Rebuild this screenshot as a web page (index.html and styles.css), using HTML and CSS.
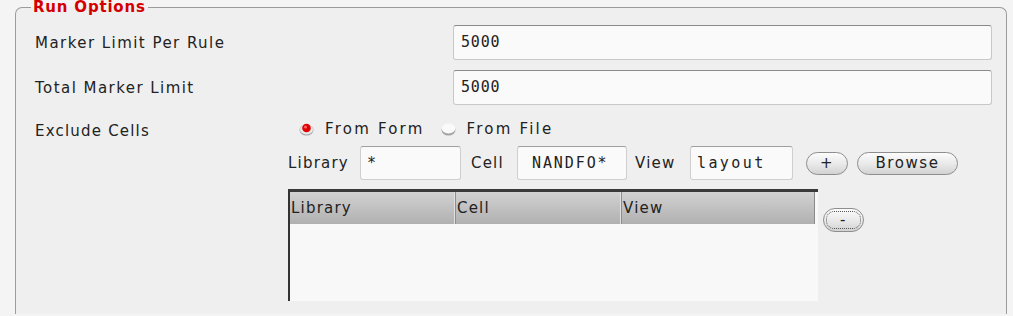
FILE: index.html
```html
<html>
	<head>
		<title>Run Options</title>
		<link rel="stylesheet" href="styles.css">
	</head>
	<body>
<fieldset class="group">
	<legend>Run Options</legend>

	<div class="row first">
		<label class="label wide">Marker Limit Per Rule</label>
		<div class="field">5000</div>
	</div>
	<div class="row">
		<label class="label wide">Total Marker Limit</label>
		<div class="field">5000</div>
	</div>

	<div class="exclude">
		<label class="label narrow">Exclude Cells</label>
		<div class="panel">
			<div class="radios">
				<svg class="radio" width="15" height="14" viewBox="0 0 15 14">
					<ellipse cx="7.5" cy="8" rx="7" ry="5.5" fill="#a4a4a4"/>
					<ellipse cx="7.5" cy="7.5" rx="6.5" ry="5" fill="#e9e9e9"/>
					<circle cx="7.5" cy="6" r="4.3" fill="#e00000"/>
					<circle cx="6.5" cy="5" r="1.5" fill="#ff6060"/>
				</svg><span class="rtext">From Form</span>
				<svg class="radio" width="15" height="14" viewBox="0 0 15 14">
					<ellipse cx="7.5" cy="8" rx="7" ry="5.5" fill="#a4a4a4"/>
					<ellipse cx="7.5" cy="6.5" rx="6.8" ry="5" fill="#fafafa"/>
				</svg><span class="rtext">From File</span>
			</div>
			<div class="cells">
				<span class="lbl l1">Library</span><div class="box lib">*</div>
				<span class="lbl l2">Cell</span><div class="box cell">NANDFO*</div>
				<span class="lbl l3">View</span><div class="box view">layout</div>
				<button class="btn plus">+</button>
				<button class="btn browse">Browse</button>
			</div>
			<div class="tablerow">
				<div class="table">
					<div class="thead">
						<div class="th c1">Library</div>
						<div class="th c2">Cell</div>
						<div class="th c3">View</div>
					</div>
					<div class="tbody"></div>
				</div>
				<button class="btn minus"><span class="focus">-</span></button>
			</div>
		</div>
	</div>
</fieldset>
	</body>
</html>
```

FILE: styles.css
```css
BODY {
	background: #f4f4f4;
	color: #222;
	font-family: "DejaVu Sans", sans-serif;
	font-size: 15px;
	letter-spacing: 1.2px;
	margin: 0;
	}
.group {
	background: #efefef;
	border: 1px solid #9c9c9c;
	border-bottom: none;
	border-radius: 7px 7px 0 0;
	box-sizing: border-box;
	height: 314px;
	margin: 0 6px 0 15px;
	padding: 10px 0 0 0;
	}
.group legend {
	color: #d40000;
	font-size: 15px;
	font-weight: bold;
	letter-spacing: 0.8px;
	line-height: 15px;
	margin-left: 15px;
	padding: 0 2px;
	}
.row {
	align-items: center;
	display: flex;
	margin-top: 10px;
	}
.row.first { margin-top: 0; }
.label { padding-left: 19px; }
.row .label { letter-spacing: 1.45px; }
.wide { width: 418px; flex: none; }
.narrow { width: 253px; flex: none; }
.field {
	background: #fafafa;
	border: 1px solid #c8c8c8;
	border-top-color: #8a8a8a;
	border-radius: 3px;
	box-sizing: border-box;
	font-family: "DejaVu Sans Mono", monospace;
	font-size: 15px;
	letter-spacing: 0.8px;
	height: 35px;
	line-height: 33px;
	padding-left: 7px;
	width: 539px;
	}
.exclude {
	display: flex;
	margin-top: 11px;
	}
.exclude .label { line-height: 26px; padding-top: 2px; }
.radios {
	align-items: center;
	display: flex;
	height: 26px;
	padding-left: 11px;
	}
.radio { flex: none; }
.rtext { margin: 0 16px 0 11px; letter-spacing: 2.2px; }
.cells {
	align-items: center;
	display: flex;
	margin-top: 4px;
	}
.lbl { flex: none; }
.l1 { width: 62px; }
.l2 { width: 36px; }
.l3 { width: 45px; }
.box {
	background: #fafafa;
	border: 1px solid #cfcfcf;
	border-top-color: #a0a0a0;
	border-radius: 3px;
	box-sizing: border-box;
	flex: none;
	font-family: "DejaVu Sans Mono", monospace;
	font-size: 15px;
	letter-spacing: 2.4px;
	height: 34px;
	line-height: 32px;
	margin: 0 10px;
	padding-left: 6px;
	}
.lib { width: 101px; }
.cell { width: 110px; margin-right: 8px; padding-left: 14px; letter-spacing: 1.9px; }
.view { width: 103px; margin-right: 13px; }
.btn {
	background: linear-gradient(#fcfcfc, #e6e6e6 60%, #d2d2d2);
	border: 1px solid #8e8e8e;
	border-radius: 12px;
	box-sizing: border-box;
	color: #222;
	flex: none;
	font-family: "DejaVu Sans", sans-serif;
	font-size: 15px;
	height: 23px;
	letter-spacing: 1.6px;
	padding: 0;
	}
.plus { width: 42px; margin-right: 9px; }
.browse { width: 101px; }
.tablerow {
	display: flex;
	margin-top: 9px;
	}
.table {
	background: #f8f8f8;
	border-left: 2px solid #333;
	border-top: 3px solid #3a3a3a;
	box-sizing: border-box;
	height: 112px;
	width: 530px;
	}
.thead {
	background: linear-gradient(#d2d2d2, #b0b0b0);
	border-right: 1px solid #8a8a8a;
	display: flex;
	height: 32px;
	margin-right: 3px;
	}
.th {
	border-right: 1px solid #8e8e8e;
	box-shadow: inset -1px 0 #e0e0e0;
	line-height: 32px;
	padding-left: 1px;
	}
.th.c3 { border-right: none; box-shadow: none; flex: 1; }
.c1 { width: 164px; }
.c2 { width: 164px; }
.minus {
	height: 24px;
	margin: 19px 0 0 5px;
	padding: 2px;
	width: 41px;
	}
.focus {
	border: 1px dotted #555;
	border-radius: 8px;
	box-sizing: border-box;
	display: block;
	height: 100%;
	line-height: 16px;
	}
```
